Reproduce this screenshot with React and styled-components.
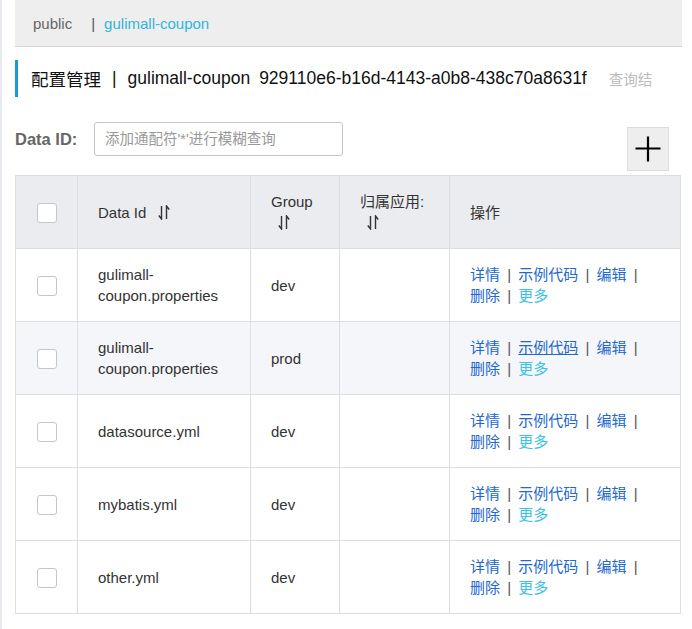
import React from "react";
import styled, { createGlobalStyle } from "styled-components";

const GlobalStyle = createGlobalStyle`
  html, body {
    margin: 0;
    padding: 0;
    background: #fff;
  }
  body {
    font-family: "Liberation Sans", "Noto Sans CJK SC", sans-serif;
    font-size: 15px;
    color: #333;
  }
`;

const Page = styled.div`
  display: flex;
  min-height: 100vh;
`;

const LeftRail = styled.div`
  width: 2px;
  flex-shrink: 0;
  background: #e6e9ee;
`;

const Main = styled.div`
  flex: 1;
  padding: 0 10px 0 13px;
  min-width: 0;
`;

const NamespaceBar = styled.div`
  display: flex;
  align-items: center;
  height: 46px;
  padding-left: 18px;
  background: #eeeeee;
  border-bottom: 1px solid #d4d4d4;
  font-size: 15px;
`;

const NamespaceItem = styled.span`
  color: ${(p) => (p.$active ? "#2fb7dd" : "#666")};
`;

const NamespaceSep = styled.span`
  color: #555;
  margin: 0 9px 0 19px;
`;

const TitleRow = styled.div`
  display: flex;
  align-items: center;
  height: 37px;
  margin-top: 13px;
  padding-left: 13px;
  border-left: 3px solid #169bd5;
  white-space: nowrap;
  overflow: hidden;
  font-size: 17.5px;
  color: #111;
`;

const TitleSep = styled.span`
  margin: 0 11px;
`;

const TitleId = styled.span`
  margin-left: 9px;
`;

const TitleHint = styled.span`
  margin-left: 22px;
  font-size: 14.5px;
  color: #bbb;
`;

const FilterRow = styled.div`
  display: flex;
  align-items: flex-start;
  margin-top: 25px;
  padding-right: 13px;
`;

const FilterLabel = styled.label`
  width: 79px;
  line-height: 34px;
  font-size: 16.5px;
  font-weight: bold;
  color: #666;
`;

const SearchInput = styled.input`
  box-sizing: border-box;
  width: 249px;
  height: 34px;
  padding: 0 10px;
  border: 1px solid #c4c6cf;
  border-radius: 3px;
  font-family: inherit;
  font-size: 14.5px;
  color: #333;
  outline: none;

  &::placeholder {
    color: #999;
  }
`;

const AddButton = styled.button`
  box-sizing: border-box;
  margin-left: auto;
  margin-top: 5px;
  width: 42px;
  height: 44px;
  padding: 0;
  display: flex;
  align-items: center;
  justify-content: center;
  background: #eeeeee;
  border: 1px solid #dcdcdc;
  cursor: pointer;
`;

const Table = styled.table`
  margin-top: 4px;
  width: 665px;
  border-collapse: collapse;
  table-layout: fixed;
  border: 1px solid #dcdee3;
`;

const HeadCell = styled.th`
  height: 72px;
  padding: 15px 20px;
  box-sizing: border-box;
  border: 1px solid #dcdee3;
  background: #ebecf0;
  text-align: ${(p) => (p.$center ? "center" : "left")};
  font-weight: normal;
  line-height: 21px;
  color: #333;
  vertical-align: middle;
`;

const Row = styled.tr`
  background: ${(p) => (p.$hover ? "#f5f6fa" : "#fff")};
`;

const Cell = styled.td`
  height: 72px;
  padding: 15px 20px;
  box-sizing: border-box;
  border: 1px solid #dcdee3;
  text-align: ${(p) => (p.$center ? "center" : "left")};
  line-height: 21px;
  color: #333;
  vertical-align: middle;
  word-wrap: break-word;
`;

const Checkbox = styled.span`
  display: inline-block;
  box-sizing: border-box;
  width: 20px;
  height: 20px;
  border: 1px solid #c4c6cf;
  border-radius: 3px;
  background: #fff;
  vertical-align: middle;
`;

const SortIcon = styled.svg`
  display: inline-block;
  margin-left: 7px;
  vertical-align: -2px;
`;

const ActionLink = styled.a`
  white-space: nowrap;
  color: ${(p) => (p.$more ? "#3cc2e2" : "#2468cc")};
  text-decoration: ${(p) => (p.$underline ? "underline" : "none")};
  cursor: pointer;
`;

const ActionSep = styled.span`
  white-space: nowrap;
  color: #555;
  margin: 0 3px;
`;

function Sort() {
  return (
    <SortIcon width="12" height="15" viewBox="0 0 12 15" fill="none" stroke="#333" strokeWidth="1.4">
      <path d="M3.5 1 V14 L0.8 10.5" />
      <path d="M8.5 14 V1 L11.2 4.5" />
    </SortIcon>
  );
}

const configs = [
  { id: "gulimall-coupon.properties", group: "dev" },
  { id: "gulimall-coupon.properties", group: "prod", hover: true },
  { id: "datasource.yml", group: "dev" },
  { id: "mybatis.yml", group: "dev" },
  { id: "other.yml", group: "dev" },
];

export default function App() {
  return (
    <Page>
      <GlobalStyle />
      <LeftRail />
      <Main>
        <NamespaceBar>
          <NamespaceItem>public</NamespaceItem>
          <NamespaceSep>|</NamespaceSep>
          <NamespaceItem $active>gulimall-coupon</NamespaceItem>
        </NamespaceBar>

        <TitleRow>
          <span>配置管理</span>
          <TitleSep>|</TitleSep>
          <span>gulimall-coupon</span>
          <TitleId>929110e6-b16d-4143-a0b8-438c70a8631f</TitleId>
          <TitleHint>查询结</TitleHint>
        </TitleRow>

        <FilterRow>
          <FilterLabel>Data ID:</FilterLabel>
          <SearchInput placeholder="添加通配符'*'进行模糊查询" />
          <AddButton aria-label="add">
            <svg width="26" height="26" viewBox="0 0 26 26" stroke="#000" strokeWidth="2.2">
              <path d="M0.5 12.5 H25.5 M13 0.5 V25.5" />
            </svg>
          </AddButton>
        </FilterRow>

        <Table>
          <colgroup>
            <col style={{ width: 62 }} />
            <col style={{ width: 173 }} />
            <col style={{ width: 89 }} />
            <col style={{ width: 110 }} />
            <col style={{ width: 231 }} />
          </colgroup>
          <thead>
            <tr>
              <HeadCell $center style={{ padding: 0 }}>
                <Checkbox />
              </HeadCell>
              <HeadCell>
                Data Id <Sort />
              </HeadCell>
              <HeadCell>
                Group <Sort />
              </HeadCell>
              <HeadCell>
                归属应用: <Sort />
              </HeadCell>
              <HeadCell>操作</HeadCell>
            </tr>
          </thead>
          <tbody>
            {configs.map((c, index) => (
              <Row key={index} $hover={c.hover}>
                <Cell $center style={{ padding: 0 }}>
                  <Checkbox />
                </Cell>
                <Cell>{c.id.replace("-", "-\u200b")}</Cell>
                <Cell>{c.group}</Cell>
                <Cell />
                <Cell>
                  <ActionLink>详情</ActionLink> <ActionSep>|</ActionSep>{" "}
                  <ActionLink $underline={c.hover}>示例代码</ActionLink> <ActionSep>|</ActionSep>{" "}
                  <ActionLink>编辑</ActionLink> <ActionSep>|</ActionSep>{" "}
                  <ActionLink>删除</ActionLink> <ActionSep>|</ActionSep>{" "}
                  <ActionLink $more>更多</ActionLink>
                </Cell>
              </Row>
            ))}
          </tbody>
        </Table>
      </Main>
    </Page>
  );
}
